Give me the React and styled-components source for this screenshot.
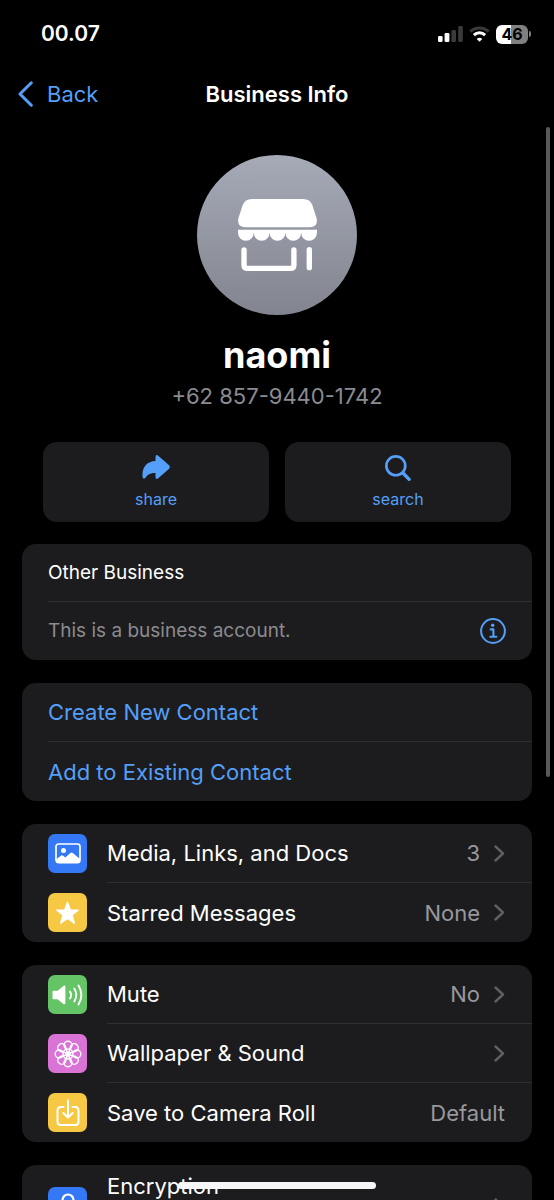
import React from "react";
import styled, { createGlobalStyle } from "styled-components";

const color = {
  blue: "#549ff8",
  card: "#1c1c1e",
  line: "#303033",
  muted: "#98989e",
  dim: "#8b8b90",
  chevron: "#5f5f63",
};

const GlobalStyle = createGlobalStyle`
  *, *::before, *::after { box-sizing: border-box; }
  body {
    margin: 0;
    background: #000;
    color: #fff;
    font-family: Inter, "Liberation Sans", sans-serif;
  }
  button { font: inherit; color: inherit; background: none; border: 0; padding: 0; margin: 0; cursor: pointer; }
  h1, h2, p { margin: 0; }
  svg { display: block; flex: none; }
`;

const Screen = styled.div`
  position: relative;
  display: flex;
  flex-direction: column;
  height: 100vh;
  overflow: hidden;
  background: #000;
`;

const StatusBar = styled.div`
  flex: none;
  display: flex;
  align-items: center;
  justify-content: space-between;
  height: 68px;
  padding: 0 23px 0 41px;
`;

const Time = styled.time`
  font-size: 21px;
  line-height: 28px;
  font-weight: 600;
`;

const StatusIcons = styled.div`
  display: flex;
  align-items: center;
  gap: 6px;
`;

const Battery = styled.div`
  display: flex;
  align-items: center;
  gap: 1px;
`;

const BatteryBody = styled.div`
  width: 32px;
  height: 19px;
  border-radius: 6px;
  background: linear-gradient(to right, #fff ${(p) => p.$level}%, #808080 ${(p) => p.$level}%);
  color: #000;
  font-size: 16px;
  line-height: 19px;
  font-weight: 700;
  text-align: center;
`;

const BatteryNub = styled.div`
  width: 2px;
  height: 6px;
  border-radius: 0 2px 2px 0;
  background: #808080;
`;

const NavBar = styled.header`
  flex: none;
  display: grid;
  grid-template-columns: 1fr auto 1fr;
  align-items: center;
  height: 52px;
  padding: 0 18px;
`;

const BackButton = styled.button`
  justify-self: start;
  display: flex;
  align-items: center;
  gap: 14px;
  color: ${color.blue};
  font-size: 22px;
  line-height: 28px;
`;

const NavTitle = styled.h1`
  font-size: 22px;
  line-height: 28px;
  font-weight: 600;
`;

const Content = styled.main`
  flex: 1;
  min-height: 0;
  overflow-y: auto;
  scrollbar-width: none;
  padding: 35px 22px 0;
`;

const Profile = styled.section`
  display: flex;
  flex-direction: column;
  align-items: center;
`;

const Avatar = styled.div`
  display: grid;
  place-items: center;
  width: 160px;
  height: 160px;
  border-radius: 50%;
  background: linear-gradient(#a6aab7, #82858f);
`;

const Name = styled.h2`
  margin-top: 18px;
  font-size: 36px;
  line-height: 44px;
  font-weight: 700;
`;

const Phone = styled.p`
  margin-top: 5px;
  color: ${color.dim};
  font-size: 22px;
  line-height: 28px;
`;

const Actions = styled.div`
  display: flex;
  gap: 16px;
  margin: 32px 21px 22px;
`;

const ActionButton = styled.button`
  flex: 1;
  display: flex;
  flex-direction: column;
  align-items: center;
  gap: 8px;
  && { padding: 13px 0; }
  border-radius: 14px;
  && { background: ${color.card}; color: ${color.blue}; }
  font-size: 16px;
  line-height: 20px;
`;

const ActionIcon = styled.span`
  display: flex;
  height: 26px;
`;

const Group = styled.section`
  margin-bottom: 23px;
  border-radius: 14px;
  background: ${color.card};
  overflow: hidden;
`;

const Row = styled.div`
  display: flex;
  align-items: center;
  gap: 20px;
  width: 100%;
  padding-left: 26px;
  text-align: left;
`;

const RowButton = styled(Row).attrs({ as: "button", type: "button" })`
  && { padding-left: 26px; }
`;

const RowBody = styled.span`
  flex: 1;
  display: flex;
  align-items: ${(p) => (p.$tall ? "flex-start" : "center")};
  gap: 14px;
  height: ${(p) => (p.$tall ? 82 : p.$compact ? 58 : 59)}px;
  padding-right: 27px;
  font-size: ${(p) => (p.$compact ? 19 : 22)}px;
  line-height: 28px;

  ${Row}:not(:last-child) > & {
    border-bottom: 1px solid ${color.line};
  }
`;

const Label = styled.span`
  flex: 1;
  padding-top: ${(p) => (p.$tall ? 7 : 0)}px;
  color: ${(p) => (p.$tone ? color[p.$tone] : "#fff")};
`;

const Value = styled.span`
  color: ${color.muted};
`;

const ChevronSlot = styled.span`
  align-self: center;
`;

const Tile = styled.span`
  display: grid;
  place-items: center;
  flex: none;
  width: 39px;
  height: 39px;
  border-radius: 7px;
  background: ${(p) => p.$bg};
`;

const InfoButton = styled.button`
  color: ${color.blue};
  margin-right: -1px;
`;

const ScrollThumb = styled.div`
  position: absolute;
  top: 127px;
  right: 4px;
  width: 4px;
  height: 54.2%;
  border-radius: 2px;
  background: #59595b;
`;

const HomeIndicator = styled.div`
  position: absolute;
  bottom: 11px;
  left: 50%;
  width: 198px;
  height: 7px;
  margin-left: -99px;
  border-radius: 4px;
  background: #f6f6f6;
`;

const SignalIcon = () => (
  <svg width="25" height="16" viewBox="0 0 25 16" aria-hidden="true">
    <rect x="0" y="10" width="4.6" height="6" rx="1.3" fill="#fff" />
    <rect x="6.6" y="7" width="4.8" height="9" rx="1.3" fill="#fff" />
    <rect x="13.4" y="4" width="4.6" height="12" rx="1.3" fill="#3a3a3a" />
    <rect x="20.2" y="0" width="4.6" height="16" rx="1.3" fill="#3a3a3a" />
  </svg>
);

const WifiIcon = () => (
  <svg width="21" height="16" viewBox="0 0 21 16" aria-hidden="true">
    <path d="M1.4 5.6a13 13 0 0 1 18.2 0" fill="none" stroke="#3a3a3a" strokeWidth="3" />
    <path d="M4.9 9.1a8.1 8.1 0 0 1 11.2 0" fill="none" stroke="#fff" strokeWidth="3" />
    <path d="M10.5 15.8 7.7 13a4 4 0 0 1 5.6 0Z" fill="#fff" />
  </svg>
);

const BackIcon = () => (
  <svg width="15" height="26" viewBox="0 0 15 26" aria-hidden="true">
    <path d="M13.3 1.8 2 13l11.3 11.2" fill="none" stroke="currentColor" strokeWidth="3" strokeLinecap="round" strokeLinejoin="round" />
  </svg>
);

const StoreIcon = () => (
  <svg width="79" height="72" viewBox="173 163 236 215" aria-hidden="true">
    <g fill="#fff">
      <path d="M214 163H368Q388 163 395 181L408 221Q412 247 388 247H194Q170 247 174 221L187 181Q195 163 214 163Z" />
      <path d="M173 255H409V264A23.6 24 0 0 1 361.8 264A23.6 24 0 0 1 314.6 264A23.6 24 0 0 1 267.4 264A23.6 24 0 0 1 220.2 264A23.6 24 0 0 1 173 264Z" />
    </g>
    <g fill="none" stroke="#fff" strokeWidth="16" strokeLinecap="round">
      <path d="M191 315V360Q191 370 201 370H330Q340 370 340 360V315" />
      <path d="M386 314V368" />
    </g>
  </svg>
);

const ShareIcon = () => (
  <svg width="28" height="24" viewBox="338 373 83 72" aria-hidden="true">
    <path
      d="M378 380Q378 369 387 376L418 403Q424 409 418 415L387 442Q378 449 378 438V427C362 426 353 433 348 441Q341 449 339 438C337 410 352 392 378 391Z"
      fill="currentColor"
    />
  </svg>
);

const SearchIcon = () => (
  <svg width="26" height="26" viewBox="1066 377 77 77" aria-hidden="true">
    <g fill="none" stroke="currentColor" strokeLinecap="round">
      <circle cx="1098" cy="409" r="28" strokeWidth="8" />
      <path d="M1120 431L1137.500 449" strokeWidth="10" />
    </g>
  </svg>
);

const InfoIcon = () => (
  <svg width="26" height="26" viewBox="0 0 26 26" aria-hidden="true">
    <circle cx="13" cy="13" r="11.900" fill="none" stroke="currentColor" strokeWidth="2" />
    <circle cx="12.700" cy="7.200" r="1.700" fill="currentColor" />
    <path d="M10.700 11.400h2.700v7M10.300 18.700h6" fill="none" stroke="currentColor" strokeWidth="2.100" strokeLinecap="round" strokeLinejoin="round" />
  </svg>
);

const Chevron = () => (
  <ChevronSlot>
    <svg width="11" height="17" viewBox="0 0 11 17" aria-hidden="true">
      <path d="M1.500 1.500 9 8.500l-7.500 7" fill="none" stroke={color.chevron} strokeWidth="2.400" strokeLinecap="round" strokeLinejoin="round" />
    </svg>
  </ChevronSlot>
);

const PhotoIcon = () => (
  <svg width="26" height="21" viewBox="0 0 26 21" aria-hidden="true">
    <rect x="1" y="1" width="24" height="18.600" rx="2.500" fill="none" stroke="#fff" strokeWidth="1.700" />
    <circle cx="8.500" cy="7.600" r="2.500" fill="#fff" />
    <path d="M1 16.500 6.200 12.600Q7.200 12 8.200 12.800L10.200 14.400 15.400 9.900Q16.600 9 17.800 9.900L25 16V18.500Q25 20 23 20H3Q1 20 1 18.500Z" fill="#fff" />
  </svg>
);

const StarIcon = () => (
  <svg width="25" height="24" viewBox="0 0 25 24" aria-hidden="true">
    <path d="M12.500 1.200 15.400 9H23.500L17.100 14 19.400 22.200 12.500 17.500 5.600 22.200 7.900 14 1.500 9H9.600Z" fill="#fff" stroke="#fff" strokeWidth="1.200" strokeLinejoin="round" />
  </svg>
);

const SpeakerIcon = () => (
  <svg width="31" height="22" viewBox="0 0 31 22" aria-hidden="true">
    <path d="M1.500 6.700H5.600L11.400 1.900Q13.400.800 13.400 3V18.800Q13.400 21 11.400 19.900L5.600 15.200H1.500Q.500 15.200.500 14.200V7.700Q.500 6.700 1.500 6.700Z" fill="#fff" />
    <g fill="none" stroke="#fff" strokeWidth="1.900" strokeLinecap="round">
      <path d="M18 7.600Q20.300 11 18 14.400" />
      <path d="M22.300 4.600Q26.300 11 22.300 17.400" />
      <path d="M26.500 1.600Q32.200 11 26.500 20.400" />
    </g>
  </svg>
);

const FlowerIcon = () => (
  <svg width="28" height="28" viewBox="-14 -14 28 28" aria-hidden="true">
    <g fill="none" stroke="#fff" strokeWidth="1.400">
      {[0, 45, 90, 135, 180, 225, 270, 315].map((a) => (
        <g key={a} transform={`rotate(${a})`}>
          <circle cx="0" cy="-8.800" r="4" />
          <path d="M0 -1.500C-1.600 -3 -2.200 -5 -3.300 -7.200M0 -1.500C1.600 -3 2.200 -5 3.300 -7.200" strokeWidth="1.100" />
        </g>
      ))}
    </g>
    <circle r="1.900" fill="#fff" />
  </svg>
);

const SaveIcon = () => (
  <svg width="24" height="28" viewBox="0 0 24 28" aria-hidden="true">
    <g fill="none" stroke="#fff" strokeWidth="2" strokeLinecap="round" strokeLinejoin="round">
      <path d="M7.500 8H5Q1.500 8 1.500 11.500V22.500Q1.500 26 5 26H19Q22.500 26 22.500 22.500V11.500Q22.500 8 19 8H16.500" />
      <path d="M12 1.500V18M7.300 14 12 18.500 16.700 14" />
    </g>
  </svg>
);

const LockIcon = () => (
  <svg width="20" height="27" viewBox="0 0 20 27" aria-hidden="true">
    <path d="M4.500 13V7a5.500 5.500 0 0 1 11 0v6" fill="none" stroke="#fff" strokeWidth="2.200" />
    <rect x="1" y="12" width="18" height="14" rx="2.500" fill="#fff" />
  </svg>
);

const SettingRow = ({ icon, bg, label, value, chevron = true, tall }) => (
  <RowButton>
    <Tile $bg={bg}>{icon}</Tile>
    <RowBody $tall={tall}>
      <Label $tall={tall}>{label}</Label>
      {value && <Value>{value}</Value>}
      {chevron && <Chevron />}
    </RowBody>
  </RowButton>
);

export default function App() {
  return (
    <>
      <GlobalStyle />
      <Screen>
        <StatusBar>
          <Time>00.07</Time>
          <StatusIcons>
            <SignalIcon />
            <WifiIcon />
            <Battery>
              <BatteryBody $level={46}>46</BatteryBody>
              <BatteryNub />
            </Battery>
          </StatusIcons>
        </StatusBar>
        <NavBar>
          <BackButton type="button">
            <BackIcon />
            Back
          </BackButton>
          <NavTitle>Business Info</NavTitle>
        </NavBar>
        <Content>
          <Profile>
            <Avatar>
              <StoreIcon />
            </Avatar>
            <Name>naomi</Name>
            <Phone>+62 857-9440-1742</Phone>
          </Profile>
          <Actions>
            <ActionButton type="button">
              <ActionIcon><ShareIcon /></ActionIcon>
              share
            </ActionButton>
            <ActionButton type="button">
              <ActionIcon><SearchIcon /></ActionIcon>
              search
            </ActionButton>
          </Actions>
          <Group>
            <Row>
              <RowBody $compact>
                <Label>Other Business</Label>
              </RowBody>
            </Row>
            <Row>
              <RowBody $compact>
                <Label $tone="dim">This is a business account.</Label>
                <InfoButton type="button" aria-label="About business accounts">
                  <InfoIcon />
                </InfoButton>
              </RowBody>
            </Row>
          </Group>
          <Group>
            <RowButton>
              <RowBody>
                <Label $tone="blue">Create New Contact</Label>
              </RowBody>
            </RowButton>
            <RowButton>
              <RowBody>
                <Label $tone="blue">Add to Existing Contact</Label>
              </RowBody>
            </RowButton>
          </Group>
          <Group>
            <SettingRow icon={<PhotoIcon />} bg="#3478f6" label="Media, Links, and Docs" value="3" />
            <SettingRow icon={<StarIcon />} bg="#f7c844" label="Starred Messages" value="None" />
          </Group>
          <Group>
            <SettingRow icon={<SpeakerIcon />} bg="#65c466" label="Mute" value="No" />
            <SettingRow icon={<FlowerIcon />} bg="#da73d6" label="Wallpaper & Sound" />
            <SettingRow icon={<SaveIcon />} bg="#f7c844" label="Save to Camera Roll" value="Default" chevron={false} />
          </Group>
          <Group>
            <SettingRow icon={<LockIcon />} bg="#3478f6" label="Encryption" tall />
          </Group>
        </Content>
        <ScrollThumb />
        <HomeIndicator />
      </Screen>
    </>
  );
}
